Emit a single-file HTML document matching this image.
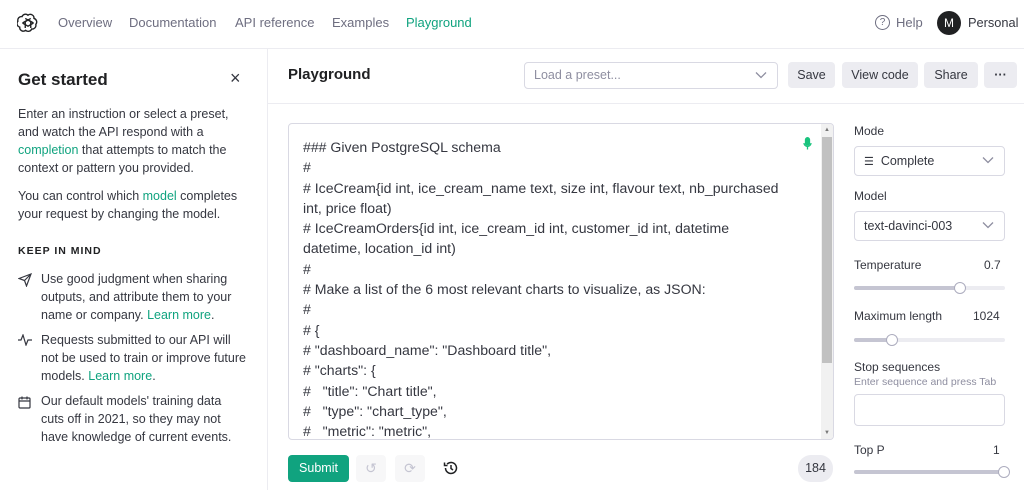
<!DOCTYPE html>
<html><head><meta charset="utf-8"><style>
*{box-sizing:border-box;margin:0;padding:0}
body{width:1024px;height:490px;overflow:hidden;font-family:"Liberation Sans",sans-serif;color:#353740;background:#fff;position:relative}
.a{position:absolute}
.nav{font-size:13px;color:#6e6e80;top:15px}
.g{color:#10a37f}
.btn{position:absolute;top:62px;height:26px;background:#ececf1;border-radius:4px;font-size:12.5px;color:#353740;text-align:center;line-height:26px}
.lbl{position:absolute;left:854px;font-size:12px;color:#353740}
.sel{position:absolute;left:854px;width:151px;height:30px;border:1px solid #d9d9e3;border-radius:4px;font-size:12.5px;line-height:28px;padding-left:9px}
.chev{position:absolute;right:10px;top:9px}
.track{position:absolute;left:854px;width:151px;height:4px;background:#ececf1;border-radius:2px}
.fill{position:absolute;left:0;top:0;height:4px;background:#c5c5d2;border-radius:2px}
.knob{position:absolute;top:-4px;width:12px;height:12px;border:1.5px solid #acacbe;background:#fff;border-radius:50%}
.side{font-size:12.5px;line-height:18px;color:#353740}
.code{position:absolute;left:303px;top:137px;font-size:14.1px;line-height:20.3px;color:#353740;white-space:pre;width:510px}
</style></head><body>
<svg class="a" style="left:17px;top:12px" width="22" height="22" viewBox="0 0 24 24" fill="none" stroke="#202123" stroke-width="1.5"><path d="M12 3.5a4 4 0 0 1 6.5 3.5 4 4 0 0 1 2 6.5 4 4 0 0 1-4.5 5 4 4 0 0 1-6.5 1.5 4 4 0 0 1-6.5-3.5 4 4 0 0 1-2-6.5 4 4 0 0 1 4.5-5A4 4 0 0 1 12 3.5z"/><path d="M9 7l6 3.5v7M15 7l-6 3.5v7M6 12l6-3.5 6 3.5M6 12l6 3.5 6-3.5"/></svg>
<div class="a nav" style="left:58px">Overview</div>
<div class="a nav" style="left:129px">Documentation</div>
<div class="a nav" style="left:235px">API reference</div>
<div class="a nav" style="left:332px">Examples</div>
<div class="a nav g" style="left:406px">Playground</div>
<div class="a" style="left:875px;top:15px;width:15px;height:15px;border:1.3px solid #6e6e80;border-radius:50%;font-size:10px;color:#6e6e80;text-align:center;line-height:13px">?</div>
<div class="a nav" style="left:896px">Help</div>
<div class="a" style="left:937px;top:11px;width:24px;height:24px;border-radius:50%;background:#202123;color:#fff;font-size:12px;text-align:center;line-height:24px">M</div>
<div class="a" style="left:968px;top:15px;font-size:12.8px;color:#353740">Personal</div>
<div class="a" style="left:0;top:48px;width:1024px;height:1px;background:#ececf1"></div>
<div class="a" style="left:267px;top:48px;width:1px;height:442px;background:#ececf1"></div>
<div class="a" style="left:18px;top:70px;font-size:17px;font-weight:bold;color:#202123">Get started</div>
<div class="a" style="left:230px;top:68px;font-size:18px;color:#353740">×</div>
<div class="a side" style="left:18px;top:105px;width:222px">Enter an instruction or select a preset, and watch the API respond with a <span class="g">completion</span> that attempts to match the context or pattern you provided.</div>
<div class="a side" style="left:18px;top:187px;width:222px">You can control which <span class="g">model</span> completes your request by changing the model.</div>
<div class="a" style="left:18px;top:245px;font-size:10.5px;font-weight:bold;letter-spacing:1px;color:#202123">KEEP IN MIND</div>
<svg class="a" style="left:18px;top:273px" width="14" height="14" viewBox="0 0 14 14" fill="none" stroke="#353740" stroke-width="1.2"><path d="M1 5.5L13 1 8.5 13 6.5 7.5z M6.5 7.5L13 1"/></svg>
<div class="a side" style="left:41px;top:270px;width:205px">Use good judgment when sharing outputs, and attribute them to your name or company. <span class="g">Learn more</span>.</div>
<svg class="a" style="left:18px;top:334px" width="14" height="12" viewBox="0 0 14 12" fill="none" stroke="#353740" stroke-width="1.2"><path d="M0 6h3l2-5 3 10 2-5h4"/></svg>
<div class="a side" style="left:41px;top:331px;width:205px">Requests submitted to our API will not be used to train or improve future models. <span class="g">Learn more</span>.</div>
<svg class="a" style="left:18px;top:396px" width="13" height="13" viewBox="0 0 13 13" fill="none" stroke="#353740" stroke-width="1.2"><rect x="1" y="2" width="11" height="10" rx="1"/><path d="M1 5h11M4 0.5v3M9 0.5v3"/></svg>
<div class="a side" style="left:41px;top:392px;width:204px">Our default models' training data cuts off in 2021, so they may not have knowledge of current events.</div>
<div class="a" style="left:288px;top:66px;font-size:15px;font-weight:bold;color:#202123">Playground</div>
<div class="a" style="left:524px;top:62px;width:254px;height:27px;border:1px solid #d9d9e3;border-radius:4px;font-size:12.5px;color:#8e8ea0;line-height:25px;padding-left:9px">Load a preset...
<svg class="chev" style="top:8px" width="12" height="8" viewBox="0 0 12 8" fill="none" stroke="#8e8ea0" stroke-width="1.3"><path d="M1 1.5l5 5 5-5"/></svg></div>
<div class="btn" style="left:788px;width:47px">Save</div>
<div class="btn" style="left:842px;width:76px">View code</div>
<div class="btn" style="left:924px;width:54px">Share</div>
<div class="btn" style="left:984px;width:33px;font-weight:bold">···</div>
<div class="a" style="left:268px;top:103px;width:756px;height:1px;background:#ececf1"></div>
<div class="a" style="left:288px;top:123px;width:546px;height:317px;border:1px solid #d9d9e3;border-radius:4px;overflow:hidden">
<div class="a" style="right:0;top:0;width:12px;height:317px;background:#f1f1f1"></div>
<div class="a" style="right:1px;top:13px;width:10px;height:226px;background:#c1c1c1"></div>
<div class="a" style="right:3px;top:3px;font-size:6px;color:#777">▲</div>
<div class="a" style="right:3px;bottom:3px;font-size:6px;color:#777">▼</div>
</div>
<svg class="a" style="left:803px;top:137px" width="9" height="13" viewBox="0 0 9 13" fill="none" stroke="#19c37d" stroke-width="1.3"><rect x="2.5" y="0.7" width="4" height="7.5" rx="2" fill="#19c37d"/><path d="M1 6a3.5 3.5 0 0 0 7 0M4.5 9.5v3"/></svg>
<div class="code">### Given PostgreSQL schema
#
# IceCream{id int, ice_cream_name text, size int, flavour text, nb_purchased
int, price float)
# IceCreamOrders{id int, ice_cream_id int, customer_id int, datetime
datetime, location_id int)
#
# Make a list of the 6 most relevant charts to visualize, as JSON:
#
# {
# "dashboard_name": "Dashboard title",
# "charts": {
#   "title": "Chart title",
#   "type": "chart_type",
#   "metric": "metric",</div>
<div class="a" style="left:268px;top:440px;width:580px;height:50px;background:#fff"></div>
<div class="a" style="left:288px;top:455px;width:61px;height:27px;background:#10a37f;border-radius:4px;color:#fff;font-size:12.5px;text-align:center;line-height:27px">Submit</div>
<div class="a" style="left:356px;top:455px;width:30px;height:27px;background:#f7f7f8;border-radius:4px;color:#c5c5d2;font-size:14px;text-align:center;line-height:27px">↺</div>
<div class="a" style="left:395px;top:455px;width:30px;height:27px;background:#f7f7f8;border-radius:4px;color:#c5c5d2;font-size:14px;text-align:center;line-height:27px">⟳</div>
<svg class="a" style="left:443px;top:460px" width="16" height="16" viewBox="0 0 16 16" fill="none" stroke="#202123" stroke-width="1.5"><path d="M2.5 8a5.5 5.5 0 1 0 1.6-3.9M1.5 2.5v3h3M8 5v3.5l2 1.5"/></svg>
<div class="a" style="left:798px;top:455px;width:35px;height:27px;background:#ececf1;border-radius:13px;font-size:12.5px;text-align:center;line-height:27px;color:#353740">184</div>
<div class="lbl" style="top:124px">Mode</div>
<div class="sel" style="top:146px"><span style="font-size:11px;color:#353740">☰</span>&nbsp; Complete<svg class="chev" width="12" height="8" viewBox="0 0 12 8" fill="none" stroke="#8e8ea0" stroke-width="1.3"><path d="M1 1.5l5 5 5-5"/></svg></div>
<div class="lbl" style="top:189px">Model</div>
<div class="sel" style="top:211px">text-davinci-003<svg class="chev" width="12" height="8" viewBox="0 0 12 8" fill="none" stroke="#8e8ea0" stroke-width="1.3"><path d="M1 1.5l5 5 5-5"/></svg></div>
<div class="lbl" style="top:258px">Temperature</div><div class="lbl" style="top:258px;left:984px">0.7</div>
<div class="track" style="top:286px"><div class="fill" style="width:106px"></div><div class="knob" style="left:100px"></div></div>
<div class="lbl" style="top:309px">Maximum length</div><div class="lbl" style="top:309px;left:973px">1024</div>
<div class="track" style="top:338px"><div class="fill" style="width:38px"></div><div class="knob" style="left:32px"></div></div>
<div class="lbl" style="top:360px">Stop sequences</div>
<div class="lbl" style="top:376px;font-size:10.5px;color:#8e8ea0">Enter sequence and press Tab</div>
<div class="a" style="left:854px;top:394px;width:151px;height:32px;border:1px solid #d9d9e3;border-radius:4px"></div>
<div class="lbl" style="top:443px">Top P</div><div class="lbl" style="top:443px;left:993px">1</div>
<div class="track" style="top:470px"><div class="fill" style="width:151px"></div><div class="knob" style="left:144px"></div></div>
</body></html>
